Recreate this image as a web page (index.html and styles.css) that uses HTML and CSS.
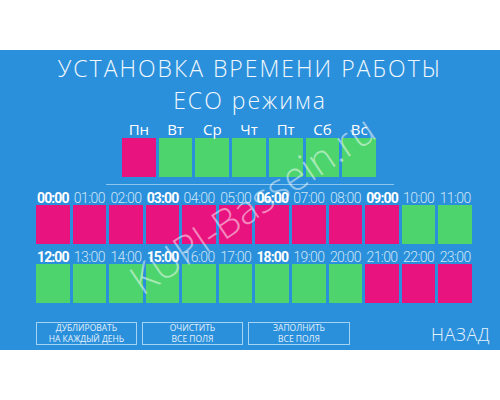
FILE: index.html
```html
<!DOCTYPE html>
<html lang="ru">
<head>
<meta charset="utf-8">
<title>ECO режим</title>
<link rel="stylesheet" href="styles.css">
</head>
<body>
<div class="panel">
  <div class="title">
    <div class="title-line">УСТАНОВКА ВРЕМЕНИ РАБОТЫ</div>
    <div class="title-line">ECO режима</div>
  </div>
  <div class="content">
    <div class="days">
      <div class="day"><div class="day-label">Пн</div><div class="box pink"></div></div>
      <div class="day"><div class="day-label">Вт</div><div class="box green"></div></div>
      <div class="day"><div class="day-label">Ср</div><div class="box green"></div></div>
      <div class="day"><div class="day-label">Чт</div><div class="box green"></div></div>
      <div class="day"><div class="day-label">Пт</div><div class="box green"></div></div>
      <div class="day"><div class="day-label">Сб</div><div class="box green"></div></div>
      <div class="day"><div class="day-label">Вс</div><div class="box green"></div></div>
    </div>
    <div class="sep"></div>
    <div class="hours">
      <div class="hour"><div class="hour-label strong">00:00</div><div class="box pink"></div></div>
      <div class="hour"><div class="hour-label">01:00</div><div class="box pink"></div></div>
      <div class="hour"><div class="hour-label">02:00</div><div class="box pink"></div></div>
      <div class="hour"><div class="hour-label strong">03:00</div><div class="box pink"></div></div>
      <div class="hour"><div class="hour-label">04:00</div><div class="box pink"></div></div>
      <div class="hour"><div class="hour-label">05:00</div><div class="box pink"></div></div>
      <div class="hour"><div class="hour-label strong">06:00</div><div class="box pink"></div></div>
      <div class="hour"><div class="hour-label">07:00</div><div class="box pink"></div></div>
      <div class="hour"><div class="hour-label">08:00</div><div class="box pink"></div></div>
      <div class="hour"><div class="hour-label strong">09:00</div><div class="box pink"></div></div>
      <div class="hour"><div class="hour-label">10:00</div><div class="box green"></div></div>
      <div class="hour"><div class="hour-label">11:00</div><div class="box green"></div></div>
      <div class="hour"><div class="hour-label strong">12:00</div><div class="box green"></div></div>
      <div class="hour"><div class="hour-label">13:00</div><div class="box green"></div></div>
      <div class="hour"><div class="hour-label">14:00</div><div class="box green"></div></div>
      <div class="hour"><div class="hour-label strong">15:00</div><div class="box green"></div></div>
      <div class="hour"><div class="hour-label">16:00</div><div class="box green"></div></div>
      <div class="hour"><div class="hour-label">17:00</div><div class="box green"></div></div>
      <div class="hour"><div class="hour-label strong">18:00</div><div class="box green"></div></div>
      <div class="hour"><div class="hour-label">19:00</div><div class="box green"></div></div>
      <div class="hour"><div class="hour-label">20:00</div><div class="box green"></div></div>
      <div class="hour"><div class="hour-label">21:00</div><div class="box pink"></div></div>
      <div class="hour"><div class="hour-label">22:00</div><div class="box pink"></div></div>
      <div class="hour"><div class="hour-label">23:00</div><div class="box pink"></div></div>
    </div>
    <div class="actions">
      <div class="btn btn-a"><span class="btn-line">ДУБЛИРОВАТЬ</span><span class="btn-line">НА КАЖДЫЙ ДЕНЬ</span></div>
      <div class="btn btn-b"><span class="btn-line">ОЧИСТИТЬ</span><span class="btn-line">ВСЕ ПОЛЯ</span></div>
      <div class="btn btn-c"><span class="btn-line">ЗАПОЛНИТЬ</span><span class="btn-line">ВСЕ ПОЛЯ</span></div>
      <div class="back">НАЗАД</div>
    </div>
  </div>
  <div class="watermark">KUPI-Bassein.ru</div>
</div>
</body>
</html>
```
FILE: styles.css
```css
html, body {
  margin: 0;
  padding: 0;
  background: #ffffff;
}

body {
  width: 500px;
  height: 400px;
  overflow: hidden;
  font-family: "Open Sans", "Liberation Sans", sans-serif;
}

.panel {
  position: relative;
  margin-top: 50px;
  height: 300px;
  background: #2b90db;
  color: #ffffff;
  padding-top: 2px;
  box-sizing: border-box;
  overflow: hidden;
}

.title {
  text-align: center;
  font-weight: 300;
  font-size: 23px;
  line-height: 32px;
  letter-spacing: 2px;
  color: #f2f8fd;
}

.content {
  padding-left: 36px;
  padding-right: 10px;
}

.days {
  margin-top: 6px;
  margin-left: 86px;
  width: 254px;
  display: grid;
  grid-template-columns: repeat(7, 1fr);
  column-gap: 3px;
}

.day-label {
  text-align: center;
  font-size: 15px;
  line-height: 14px;
  margin-bottom: 2px;
  color: #ffffff;
}

.days .box {
  height: 39px;
}

.box.pink {
  background: #e8137f;
}

.box.green {
  background: #4dd46c;
}

.sep {
  margin: 7px 0 0 70px;
  width: 288px;
  height: 1px;
  background: #8cc6ee;
}

.hours {
  margin-top: 7px;
  width: 436px;
  display: grid;
  grid-template-columns: repeat(12, 1fr);
  column-gap: 3px;
  row-gap: 7px;
}

.hour-label {
  text-align: center;
  font-family: Roboto, "Liberation Sans", sans-serif;
  font-weight: 300;
  font-size: 14px;
  line-height: 12px;
  letter-spacing: -0.6px;
  margin-bottom: 1px;
  color: #cfe6f8;
  white-space: nowrap;
}

.hour-label.strong {
  font-weight: 700;
  letter-spacing: -0.9px;
  color: #ffffff;
}

.hours .box {
  height: 39px;
}

.actions {
  margin-top: 19px;
  display: flex;
  align-items: center;
  gap: 5px;
}

.btn {
  height: 23px;
  box-sizing: border-box;
  border: 1px solid #a7d3f3;
  display: flex;
  flex-direction: column;
  align-items: center;
  justify-content: center;
  font-size: 8.5px;
  line-height: 10.5px;
  font-weight: 400;
  color: #e3f1fb;
  white-space: nowrap;
}

.btn-line {
  display: block;
}

.btn-a, .btn-b {
  width: 101px;
}

.btn-c {
  width: 102px;
}

.back {
  margin-left: auto;
  font-size: 18px;
  font-weight: 300;
  line-height: 20px;
  color: #e8f3fc;
  letter-spacing: 0.5px;
}

.watermark {
  position: absolute;
  left: 252px;
  top: 154px;
  transform: translate(-50%, -50%) rotate(-34deg);
  font-size: 40px;
  font-weight: 300;
  line-height: 1;
  color: rgba(255, 255, 255, 0.5);
  white-space: nowrap;
  pointer-events: none;
}
```
